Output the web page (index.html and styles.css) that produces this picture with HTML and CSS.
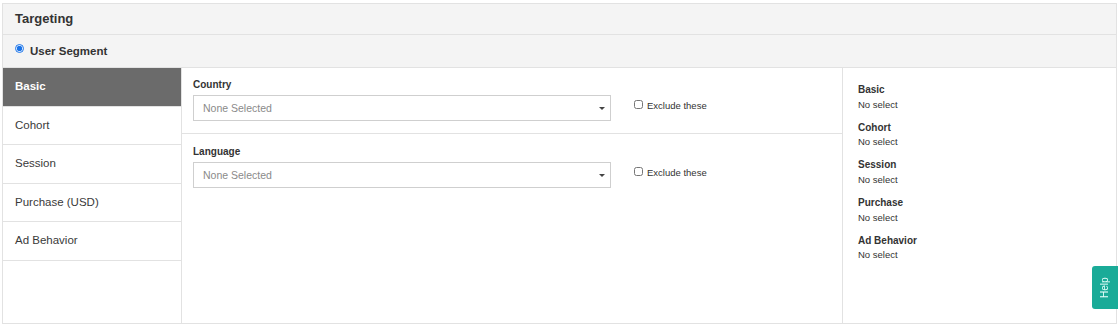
FILE: index.html
```html
<!DOCTYPE html>
<html lang="en">
<head>
    <meta charset="UTF-8">
    <meta name="viewport" content="width=device-width, initial-scale=1.0">
    <title>Targeting</title>
    <link rel="stylesheet" href="styles.css">
</head>
<body>
    <div class="panel">
        <div class="panel-title">Targeting</div>
        <div class="segment-row">
            <label class="radio"><input type="radio" name="target" checked> User Segment</label>
        </div>

        <div class="panel-body">
            <ul class="tabs">
                <li class="tab active">Basic</li>
                <li class="tab">Cohort</li>
                <li class="tab">Session</li>
                <li class="tab">Purchase (USD)</li>
                <li class="tab">Ad Behavior</li>
            </ul>

            <div class="fields">
                <div class="field">
                    <div class="field-label">Country</div>
                    <div class="field-row">
                        <div class="select">None Selected<span class="caret"></span></div>
                        <label class="exclude"><input type="checkbox"> Exclude these</label>
                    </div>
                </div>
                <div class="field">
                    <div class="field-label">Language</div>
                    <div class="field-row">
                        <div class="select">None Selected<span class="caret"></span></div>
                        <label class="exclude"><input type="checkbox"> Exclude these</label>
                    </div>
                </div>
            </div>

            <div class="summary">
                <div class="summary-item"><b>Basic</b><span>No select</span></div>
                <div class="summary-item"><b>Cohort</b><span>No select</span></div>
                <div class="summary-item"><b>Session</b><span>No select</span></div>
                <div class="summary-item"><b>Purchase</b><span>No select</span></div>
                <div class="summary-item"><b>Ad Behavior</b><span>No select</span></div>
            </div>
        </div>
    </div>

    <button class="help">Help</button>
</body>
</html>
```

FILE: styles.css
```css
body {
    font-family: "Liberation Sans", Arial, sans-serif;
    margin: 3px 2px 2px 2px;
    color: #333;
    background: #fff;
}

.panel {
    border: 1px solid #e2e2e2;
}

.panel-title {
    height: 30px;
    line-height: 30px;
    padding-left: 12px;
    background: #f4f4f4;
    border-bottom: 1px solid #e2e2e2;
    font-size: 13px;
    font-weight: bold;
}

.segment-row {
    height: 32px;
    background: #f4f4f4;
    border-bottom: 1px solid #e2e2e2;
    display: flex;
    align-items: center;
    padding-left: 12px;
}

.radio {
    font-size: 11.5px;
    font-weight: bold;
    display: flex;
    align-items: center;
    gap: 6px;
    position: relative;
    top: 0;
}

.radio input {
    width: 9px;
    height: 9px;
    margin: 0;
    accent-color: #1a73e8;
    position: relative;
    top: -3px;
}

.panel-body {
    display: flex;
    height: 255px;
}

.tabs {
    list-style: none;
    margin: 0;
    padding: 0;
    width: 178px;
    border-right: 1px solid #e2e2e2;
}

.tab {
    height: 37.6px;
    line-height: 37.6px;
    padding-left: 12px;
    font-size: 11.5px;
    color: #3a3a3a;
    border-bottom: 1px solid #e2e2e2;
}

.tab.active {
    background: #6b6b6b;
    color: #fff;
    font-weight: bold;
}

.fields {
    width: 660px;
    border-right: 1px solid #e2e2e2;
}

.field {
    padding: 10px 11px 12px 11px;
    border-bottom: 1px solid #e2e2e2;
}

.field + .field {
    padding-top: 11px;
}

.field:last-child {
    border-bottom: none;
}

.field-label {
    font-size: 10px;
    font-weight: bold;
    line-height: 14px;
    margin-bottom: 3px;
}

.field-row {
    display: flex;
    align-items: flex-start;
    gap: 23px;
}

.select {
    width: 398px;
    height: 24px;
    line-height: 24px;
    border: 1px solid #cfcfcf;
    padding: 0 9px;
    font-size: 10.5px;
    color: #8a8a8a;
    position: relative;
}

.caret {
    position: absolute;
    right: 5px;
    top: 11px;
    border-left: 3px solid transparent;
    border-right: 3px solid transparent;
    border-top: 3px solid #444;
}

.exclude {
    font-size: 9.5px;
    display: flex;
    align-items: center;
    gap: 4px;
    margin-top: 5px;
}

.exclude input {
    width: 9px;
    height: 9px;
    margin: 0;
    position: relative;
    top: -1px;
}

.summary {
    flex: 1;
    padding: 15px 15px;
}

.summary-item {
    display: flex;
    flex-direction: column;
    font-size: 9.5px;
    line-height: 14.5px;
    margin-bottom: 8.7px;
}

.summary-item b {
    font-size: 10px;
}

.help {
    position: fixed;
    right: 1px;
    top: 266px;
    width: 26px;
    height: 43px;
    border: none;
    background: #1aab98;
    color: #e8fffb;
    font-family: "Liberation Sans", Arial, sans-serif;
    font-size: 10px;
    padding: 0;
    writing-mode: vertical-rl;
    transform: rotate(180deg);
    border-radius: 0 3px 3px 0;
}
```
